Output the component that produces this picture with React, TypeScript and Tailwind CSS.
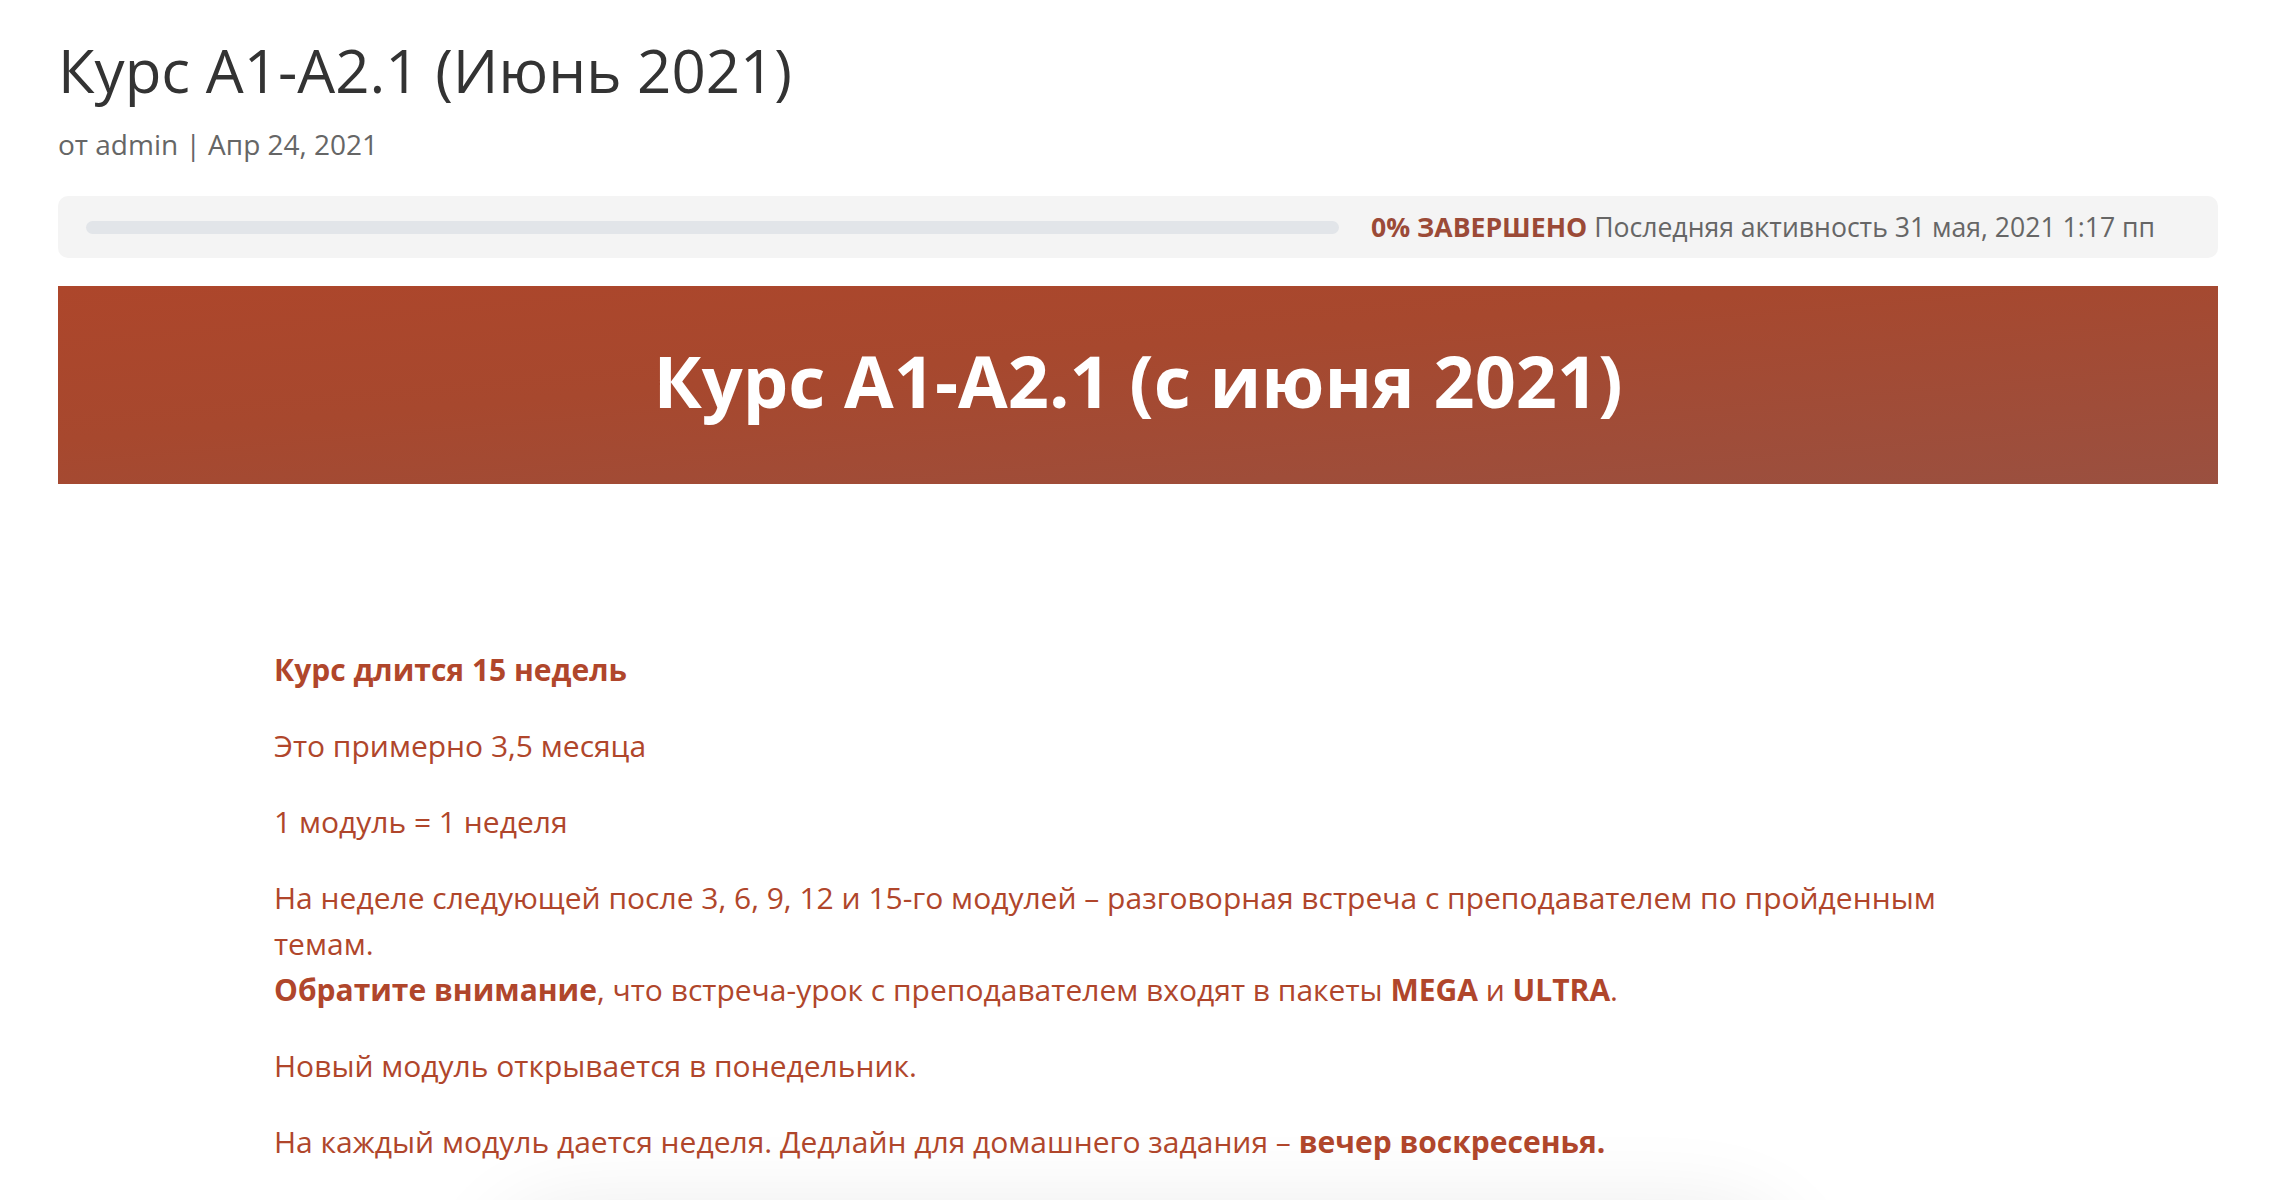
import React from 'react';

const font = { fontFamily: '"Open Sans", "Noto Sans", sans-serif' };

const ProgressBox = () => (
    <div className="flex items-center h-[62px] w-[2160px] rounded-[10px] bg-[#f4f4f4] pl-[28px] pr-[40px]">
        <div className="h-[13px] w-[1253px] rounded-full bg-[#e2e5e9]" />
        <div className="ml-[32px] text-[26.6px] leading-none whitespace-nowrap">
            <span className="font-bold text-[#9b4a37]">0% ЗАВЕРШЕНО</span>{' '}
            <span className="text-[#666666]">Последняя активность 31 мая, 2021 1:17 пп</span>
        </div>
    </div>
);

const Banner = () => (
    <div className="flex items-center justify-center h-[198px] w-[2160px] mt-[28px] bg-[linear-gradient(175deg,#ad462b_0%,#a7482e_40%,#9a5040_100%)]">
        <h2 className="text-white font-bold text-[72px] leading-none pb-[10px]">
            Курс A1-A2.1 (с июня 2021)
        </h2>
    </div>
);

export default function App() {
    return (
        <div className="relative h-[1200px] overflow-hidden bg-white" style={font}>
            <div className="pl-[58px]">
                <h1 className="pt-[28px] text-[60px] leading-[84px] text-[#333333] font-normal">
                    Курс A1-A2.1 (Июнь 2021)
                </h1>
                <p className="mt-[14px] text-[28px] leading-[36px] text-[#666666]">
                    от admin | Апр 24, 2021
                </p>
                <div className="mt-[34px]">
                    <ProgressBox />
                </div>
                <Banner />
            </div>

            <div className="mx-auto w-[1734px] pt-[163px] text-[30px] leading-[46px] text-[#b0462b]">
                <p className="pb-[30px] font-bold">Курс длится 15 недель</p>
                <p className="pb-[30px]">Это примерно 3,5 месяца</p>
                <p className="pb-[30px]">1 модуль = 1 неделя</p>
                <p className="pb-[30px]">
                    На неделе следующей после 3, 6, 9, 12 и 15-го модулей – разговорная встреча с
                    преподавателем по пройденным темам.
                    <br />
                    <strong>Обратите внимание</strong>, что встреча-урок с преподавателем входят в пакеты{' '}
                    <strong>MEGA</strong> и <strong>ULTRA</strong>.
                </p>
                <p className="pb-[30px]">Новый модуль открывается в понедельник.</p>
                <p className="pb-[30px]">
                    На каждый модуль дается неделя. Дедлайн для домашнего задания –{' '}
                    <strong>вечер воскресенья.</strong>
                </p>
            </div>

            <div className="mx-auto mt-[16px] h-[200px] w-[1300px] rounded-[80px] bg-white shadow-[0_0_90px_rgba(0,0,0,0.09)]" />
        </div>
    );
}
